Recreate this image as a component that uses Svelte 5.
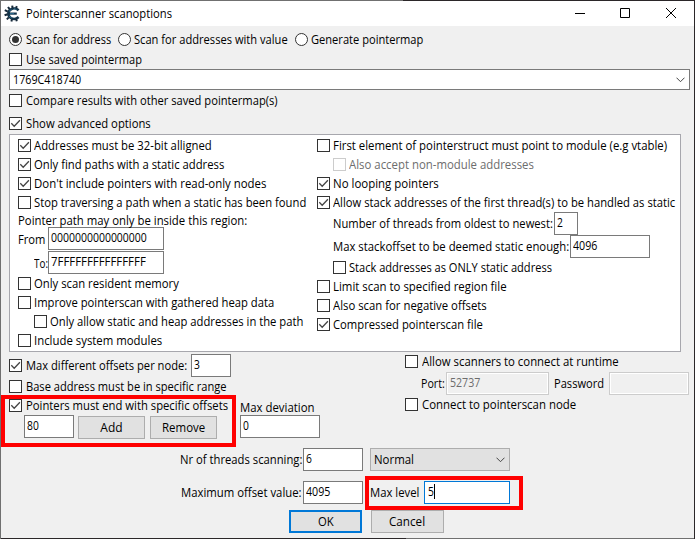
<script>
  // Condenses a label horizontally so it occupies the given width.
  function fit(node, width) {
    const natural = node.offsetWidth;
    node.style.transform = `scaleX(${width / natural})`;
    node.style.marginRight = `${width - natural}px`;
  }

  const leftTop = [
    { label: 'Addresses must be 32-bit alligned', w: 178, on: true },
    { label: 'Only find paths with a static address', w: 190, on: true },
    { label: "Don't include pointers with read-only nodes", w: 232, on: true },
    { label: 'Stop traversing a path when a static has been found', w: 272 }
  ];
  const leftBottom = [
    { label: 'Only scan resident memory', w: 145 },
    { label: 'Improve pointerscan with gathered heap data', w: 240 },
    { label: 'Only allow static and heap addresses in the path', w: 253, indent: true },
    { label: 'Include system modules', w: 128 }
  ];
  const rightTop = [
    { label: 'First element of pointerstruct must point to module (e.g vtable)', w: 334 },
    { label: 'Also accept non-module addresses', w: 185, indent: true, off: true },
    { label: 'No looping pointers', w: 106, on: true },
    { label: 'Allow stack addresses of the first thread(s) to be handled as static', w: 342, on: true }
  ];
  const rightBottom = [
    { label: 'Stack addresses as ONLY static address', w: 203, indent: true },
    { label: 'Limit scan to specified region file', w: 174 },
    { label: 'Also scan for negative offsets', w: 154 },
    { label: 'Compressed pointerscan file', w: 150, on: true }
  ];
  const radios = [
    { label: 'Scan for address', w: 85, on: true },
    { label: 'Scan for addresses with value', w: 154 },
    { label: 'Generate pointermap', w: 112 }
  ];
</script>

{#snippet text(label, w)}
  <span class="t" use:fit={w}>{label}</span>
{/snippet}

{#snippet check(c)}
  <div class="row" class:indent={c.indent} class:off={c.off}>
    <span class="box">
      {#if c.on}
        <svg width="11" height="11" viewBox="0 0 11 11"><path d="M1.3 5.3 4.2 8.2 9.9 2.3" /></svg>
      {/if}
    </span>
    {@render text(c.label, c.w)}
  </div>
{/snippet}

{#snippet field(kind, value, w)}
  <div class="field {kind}">{#if value}{@render text(value, w)}{/if}{#if kind === 'level'}<i class="caret"></i>{/if}</div>
{/snippet}

<div class="window">
  <header>
    <svg class="logo" width="17" height="17" viewBox="0 0 17 17">
      <path d="M14.6 5.2C12.5 3.2 9.2 2.9 6.9 4.4 3.6 6.4 3.6 11 6.9 13 9.2 14.4 12.5 14 14.6 12" fill="none" stroke="#123349" stroke-width="2.6" />
      <path d="M3.5 8.6H12.8" stroke="#123349" stroke-width="2.2" />
      <path d="M5.6 4.2 4 2M8.6 3 8.2.6M12 3.5 12.8 1.2M3.8 6.6.8 5.2M3.6 9.2 .6 10.3M4.8 12.4 2.8 14.4M8 14 7.4 16.4M12 13.6 12.8 16.2" stroke="#16293a" stroke-width="2" />
      <path d="M5 6.4 7.5 4.4M5 11.1 8 13.2M10 3.6 12.4 4.4M6 8.6H10" stroke="#2f7096" stroke-width=".9" />
    </svg>
    <span class="title">{@render text('Pointerscanner scanoptions', 146)}</span>
    <div class="controls">
      <svg width="12" height="12" viewBox="0 0 12 12"><path d="M2 5.5H12" /></svg>
      <svg width="12" height="12" viewBox="0 0 12 12"><path d="M1.5 .5H10.5V9.5H1.5Z" /></svg>
      <svg width="12" height="12" viewBox="0 0 12 12"><path d="M1 0 11 10M11 0 1 10" /></svg>
    </div>
  </header>

  <main>
    <div class="row radios">
      {#each radios as r}
        <div class="radio"><span class="dot" class:on={r.on}></span>{@render text(r.label, r.w)}</div>
      {/each}
    </div>
    {@render check({ label: 'Use saved pointermap', w: 116 })}
    <div class="combo saved">
      {@render text('1769C418740', 68)}
      <svg width="9" height="6" viewBox="0 0 9 6"><path d="M.5 .7 4.5 4.7 8.5 .7" /></svg>
    </div>
    <div class="compare">{@render check({ label: 'Compare results with other saved pointermap(s)', w: 252 })}</div>
    <div class="advanced">{@render check({ label: 'Show advanced options', w: 125, on: true })}</div>

    <section class="panel">
      <div class="col left">
        {#each leftTop as c}{@render check(c)}{/each}
        <div class="caption path">{@render text('Pointer path may only be inside this region:', 229)}</div>
        <div class="line region"><div class="lab">{@render text('From', 27)}</div>{@render field('addr', '0000000000000000', 96)}</div>
        <div class="line region to"><div class="lab">{@render text('To:', 14)}</div>{@render field('addr', '7FFFFFFFFFFFFFFF', 95)}</div>
        {#each leftBottom as c}{@render check(c)}{/each}
      </div>
      <div class="col right">
        {#each rightTop as c}{@render check(c)}{/each}
        <div class="line threads"><div class="lab">{@render text('Number of threads from oldest to newest:', 220)}</div>{@render field('tiny', '2', 6)}</div>
        <div class="line stack"><div class="lab">{@render text('Max stackoffset to be deemed static enough:', 236)}</div>{@render field('mid', '4096', 24)}</div>
        {#each rightBottom as c}{@render check(c)}{/each}
      </div>
    </section>

    <section class="lower">
      <div class="offsets">
        <div class="line pernode">
          {@render check({ label: 'Max different offsets per node:', w: 161, on: true })}
          {@render field('node', '3', 6)}
        </div>
        {@render check({ label: 'Base address must be in specific range', w: 201 })}
        {@render check({ label: 'Pointers must end with specific offsets', w: 202, on: true })}
        <div class="line ends">
          {@render field('end', '80', 12)}
          <button>{@render text('Add', 22)}</button>
          <button>{@render text('Remove', 43)}</button>
        </div>
      </div>
      <div class="deviation">
        <div class="caption">{@render text('Max deviation', 75)}</div>
        {@render field('mid', '0', 6)}
      </div>
      <div class="network">
        {@render check({ label: 'Allow scanners to connect at runtime', w: 197 })}
        <div class="line port">
          <div class="lab">{@render text('Port:', 24)}</div>
          {@render field('num disabled', '52737', 30)}
          <div class="lab pass">{@render text('Password', 50)}</div>
          {@render field('mid disabled', '', 0)}
        </div>
        {@render check({ label: 'Connect to pointerscan node', w: 154 })}
      </div>
    </section>

    <section class="limits">
      <div class="line">
        <div class="lab end">{@render text('Nr of threads scanning:', 122)}</div>
        {@render field('count', '6', 6)}
        <div class="combo priority">
          {@render text('Normal', 40)}
          <svg width="9" height="6" viewBox="0 0 9 6"><path d="M.5 .7 4.5 4.7 8.5 .7" /></svg>
        </div>
      </div>
      <div class="line">
        <div class="lab end">{@render text('Maximum offset value:', 121)}</div>
        {@render field('count', '4095', 24)}
        <div class="lab maxlevel">{@render text('Max level', 49)}</div>
        {@render field('level', '5', 6)}
      </div>
    </section>

    <footer>
      <button class="ok">{@render text('OK', 16)}</button>
      <button>{@render text('Cancel', 36)}</button>
    </footer>
  </main>

  <div class="mark ends-mark"></div>
  <div class="mark level-mark"></div>
</div>

<style>
  .window, .window * { box-sizing: border-box; }
  .window {
    position: relative;
    width: 695px;
    height: 539px;
    padding: 1px 0;
    overflow: hidden;
    background:
      linear-gradient(90deg, #707070 402px, #2b2729 402px) 0 0 / 100% 1px no-repeat,
      linear-gradient(90deg, #2b2729 405px, #707070 405px) 0 100% / 100% 1px no-repeat,
      #f0f0f0;
    border: solid #2b2729;
    border-width: 0 1px;
    border-left-color: #707070;
    font: 12px/15px "Open Sans", "Noto Sans", sans-serif;
    color: #000;
  }
  .t { display: inline-block; flex: none; white-space: pre; transform-origin: 0 50%; }
  svg { display: block; flex: none; fill: none; stroke: #444; }

  header { display: flex; align-items: center; height: 25px; background: #fff; padding-left: 3px; }
  .title { margin: 0 0 0 5px; display: flex; }
  .controls { display: flex; gap: 34px; margin: 1px 17px 0 auto; }
  .controls svg { stroke: #000; stroke-width: 1; }

  main { padding: 4px 3px 0 8px; }
  .row { display: flex; align-items: center; height: 19px; }
  .box {
    flex: none;
    width: 13px;
    height: 13px;
    margin-right: 4px;
    border: 1px solid #333;
    background: #fff;
  }
  .box svg { stroke: #444; stroke-width: 1.3; }
  .panel .box { margin-right: 3px; }
  .indent { padding-left: 16px; }
  .off { color: #6d6d6d; }
  .off .box { border-color: #ccc; }

  .radios { gap: 7px; margin-bottom: 1px; }
  .radio { display: flex; align-items: center; }
  .dot {
    display: grid;
    place-items: center;
    width: 13px;
    height: 13px;
    margin-right: 3px;
    border: 1px solid #333;
    border-radius: 50%;
    background: #fff;
  }
  .dot.on { margin-right: 4px; }
  .dot.on::after { content: ''; width: 7px; height: 7px; border-radius: 50%; background: #333; }

  .combo { display: flex; align-items: center; justify-content: space-between; padding: 0 4px; border: 1px solid #7a7a7a; background: #fff; }
  .saved { width: 681px; height: 21px; padding-left: 3px; }
  .compare { margin-top: 1px; }
  .advanced { margin: 4px 0 1px; }

  .panel { display: flex; width: 672px; height: 218px; padding: 1px 0 0 8px; border: 1px solid #a7a7ad; background: #fff; }
  .left { width: 299px; }
  .line { display: flex; align-items: center; height: 23px; }
  .lab { display: flex; flex: none; }
  .caption { display: flex; align-items: center; height: 15px; }
  .path { padding-top: 2px; }
  .region .lab { width: 30px; padding-top: 2px; }
  .to { margin-top: 1px; }
  .to .lab { padding-left: 16px; }
  .threads .lab { width: 237px; padding-left: 16px; }
  .stack .lab { width: 253px; padding-left: 16px; }

  .field { display: flex; flex: none; height: 23px; padding: 2px 0 0 3px; border: 1px solid #7a7a7a; background: #fff; }
  .addr { width: 116px; padding-left: 2px; }
  .tiny { width: 24px; padding-left: 2px; }
  .mid { width: 80px; padding-left: 2px; }
  .node { width: 40px; padding-left: 2px; }
  .end { width: 50px; padding-left: 2px; }
  .num { width: 103px; }
  .count { width: 60px; padding-left: 2px; }
  .level { width: 86px; border-color: #0078d7; }
  .caret { width: 1px; height: 15px; margin: 0; background: #000; }
  .disabled { border-color: #ccc; background: #f0f0f0; color: #6d6d6d; box-shadow: inset 0 0 0 1px #fff; }

  .lower { display: flex; height: 87px; }
  .offsets { width: 231px; padding-top: 2px; }
  .pernode { gap: 4px; }
  .ends { height: 24px; padding-left: 15px; }
  .ends .field { align-self: flex-start; margin-right: 4px; }
  button {
    display: flex;
    align-items: center;
    justify-content: center;
    width: 67px;
    height: 23px;
    padding: 0;
    border: 1px solid #adadad;
    border-radius: 0;
    background: #e1e1e1;
    color: #000;
    font: inherit;
  }
  .ends button { align-self: flex-end; margin-right: 5px; }
  .deviation { width: 165px; padding-top: 48px; }
  .network .port { margin-top: 1px; padding-left: 16px; }
  .port .lab { width: 25px; }
  .port .lab.pass { width: 60px; padding-left: 5px; }

  .limits { display: flex; flex-direction: column; gap: 10px; padding-top: 9px; }
  .lab.end { width: 294px; justify-content: flex-end; padding-right: 1px; }
  .priority { width: 140px; height: 23px; margin-left: 7px; border-color: #adadad; background: #e1e1e1; padding: 0 4px 0 3px; }
  .lab.maxlevel { width: 61px; padding-left: 7px; }
  footer { display: flex; gap: 9px; padding: 6px 0 0 280px; }
  footer button { width: 73px; }
  .ok { border: 2px solid #0078d7; }

  .mark { position: absolute; border: 4px solid #f00; pointer-events: none; }
  .ends-mark { left: 0; top: 395px; width: 235px; height: 52px; }
  .level-mark { left: 364px; top: 476px; width: 158px; height: 34px; }
</style>
